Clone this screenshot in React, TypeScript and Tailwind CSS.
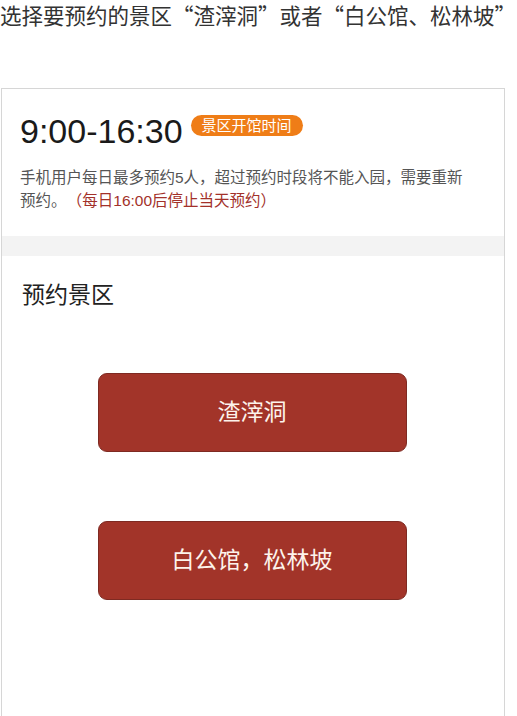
export default function App() {
  const font = { fontFamily: '"Liberation Sans", "Noto Sans CJK SC", sans-serif' };
  const cjk = { fontFamily: '"Noto Sans CJK SC", "Liberation Sans", sans-serif' };
  return (
    <div className="w-[517px] h-[716px] bg-white overflow-hidden" style={font}>
      <div
        className="h-[88px] text-[21.5px] leading-[30px] text-[#333] whitespace-nowrap"
        style={cjk}
      >
        选择要预约的景区“渣滓洞”或者“白公馆、松林坡”
      </div>

      <div className="ml-[1px] w-[504px] h-[640px] border border-[#d6d6d6] bg-white">
        <div className="px-[18px] pt-[22px] h-[147px]">
          <div className="flex items-center gap-[8px]">
            <span className="text-[34px] leading-[40px] text-[#1a1a1a]">9:00-16:30</span>
            <span className="mt-[-12px] rounded-full bg-[#ef7d17] px-[11px] h-[21px] leading-[21px] text-[15px] text-white">
              景区开馆时间
            </span>
          </div>
          <p className="mt-[15px] w-[455px] text-[15.5px] leading-[23px] text-[#555]">
            手机用户每日最多预约5人，超过预约时段将不能入园，需要重新预约。
            <span className="ml-[8px] text-[#a3312a]">（每日16:00后停止当天预约）</span>
          </p>
        </div>

        <div className="h-[20px] bg-[#f3f3f3]" />

        <div className="px-[20px] pt-[24px]">
          <h2 className="text-[23px] leading-[30px] text-[#222]">预约景区</h2>
          <div className="mt-[63px] flex flex-col items-center gap-[69px] pr-[2px]">
            <button className="w-[309px] h-[79px] rounded-[9px] bg-[#a23429] border border-[#7e2a22] text-[23px] text-[#fdf3ec]">
              渣滓洞
            </button>
            <button className="w-[309px] h-[79px] rounded-[9px] bg-[#a23429] border border-[#7e2a22] text-[23px] text-[#fdf3ec]">
              白公馆，松林坡
            </button>
          </div>
        </div>
      </div>
    </div>
  );
}
